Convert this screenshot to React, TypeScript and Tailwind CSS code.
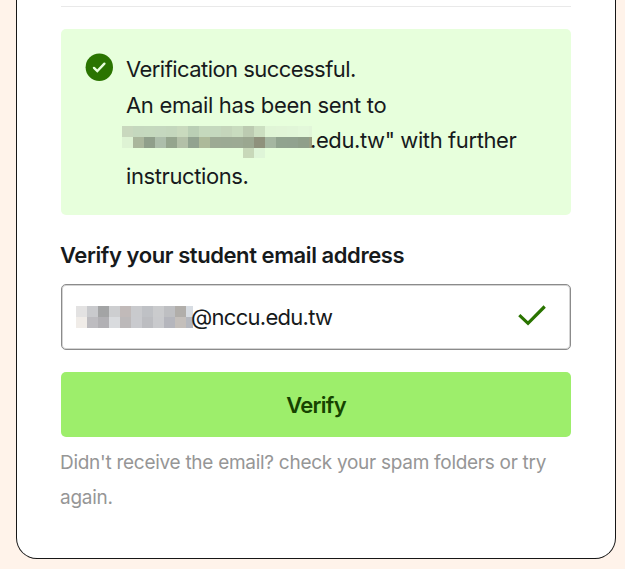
interface MosaicProps {
  rows: string[][];
}

const RECIPIENT_ROWS = [
  ["#c9d8be", "#c5d8be", "#c5d9be", "#c5d8bf", "#c4d7bd", "#c9dabe", "#bacfb5", "#c5d9bd", "#c5d9be", "#c5d6bb", "#c9dcbf", "#bccbb1", "#ccdfc1", "#e0f5d6", "#e1f5d7", "#e1f6d8", "#e3f8da", "#e2f6d9"],
  ["#def3d4", "#aab69c", "#909f8b", "#adbeab", "#95a58e", "#b3c0a8", "#92a390", "#adba9a", "#9daa94", "#9caa94", "#9daa94", "#9ba790", "#8f917c", "#a5b6a1", "#91a38f", "#91a28f", "#8f9f8a", "#999f83"],
  ["", "", "", "", "", "", "", "", "", "", "", "#c8d8b9", "#dff5d8", "", "", "", "", ""],
];

const LOCAL_PART_ROWS = [
  ["#e3e2e2", "#c9cacd", "#a3a4a5", "#cdced0", "#c1bab9", "#c9cacd", "#bfc1c5", "#cacbcd", "#bebfc2", "#b1aeaa", "#d7dce2"],
  ["#f0ece8", "#bdbcc0", "#b1b0b4", "#d9dbde", "#bcb9ba", "#c9cace", "#bcbdc1", "#c9cacd", "#b5b6bd", "#c4bfbb", "#b5b8bf"],
];

function Mosaic({ rows }: MosaicProps) {
  return (
    <span aria-hidden="true" className="flex flex-col">
      {rows.map((row, i) => (
        <span key={i} className="flex h-[11px]">
          {row.map((color, j) => (
            <span key={j} className="h-full w-[11px] shrink-0" style={{ backgroundColor: color || undefined }} />
          ))}
        </span>
      ))}
    </span>
  );
}

function SuccessIcon() {
  return (
    <svg viewBox="0 0 28 28" className="mt-px h-7 w-7 shrink-0" fill="none">
      <circle cx="14.3" cy="14.3" r="13.7" fill="#2a7400" />
      <path d="M9 14.9 12.3 18 19.4 10.7" stroke="#e7ffdc" strokeWidth="2.4" strokeLinecap="round" />
    </svg>
  );
}

function SuccessAlert() {
  return (
    <div role="status" className="flex h-[186px] rounded-[5px] bg-[#e7ffdc] pt-[23px] pl-[24px] text-[22px] leading-[35.6px]">
      <SuccessIcon />
      <div className="ml-[13px] whitespace-nowrap">
        <p className="tracking-[-0.55px]">Verification successful.</p>
        <p className="tracking-[-0.31px]">An email has been sent to</p>
        <p className="flex">
          <span className="-ml-[4px] h-[35px] w-[190px] shrink-0 overflow-hidden pt-[3px]">
            <Mosaic rows={RECIPIENT_ROWS} />
          </span>
          <span className="-ml-[2px] tracking-[-0.4px]">.edu.tw" with further</span>
        </p>
        <p className="tracking-[-0.4px]">instructions.</p>
      </div>
    </div>
  );
}

function EmailField() {
  return (
    <div className="mt-[11px] flex h-[66px] items-center rounded-[5px] border border-[#8b8b8b] pl-[14px] text-[22px] shadow-[inset_0_0_0_1px_#d4d4d4]">
      <span className="w-[117px] shrink-0 overflow-hidden">
        <Mosaic rows={LOCAL_PART_ROWS} />
      </span>
      <span className="-ml-[2px] tracking-[-0.72px]">@nccu.edu.tw</span>
      <svg viewBox="0 0 28 21" className="mr-[24px] mb-[3px] ml-auto h-[21px] w-7" fill="none">
        <path d="M1.3 10.2 10 18.3 26.7 1.5" stroke="#2a7400" strokeWidth="3.2" />
      </svg>
    </div>
  );
}

export default function App() {
  return (
    <main className="h-[569px] overflow-hidden bg-[#fff3ea] pl-4 font-['Inter',sans-serif] text-[#171a1c]">
      <section className="h-[559px] w-[600px] rounded-b-[21px] border border-t-0 border-[#171717] bg-white pt-[6px] pr-[44px] pl-[44px]">
        <div className="h-px bg-[#e9e9e9]" />
        <div className="mt-[22px]">
          <SuccessAlert />
        </div>
        <h2 className="mt-[25px] -ml-px h-[33px] text-[22px] leading-[31px] font-semibold tracking-[-0.42px] whitespace-nowrap">
          Verify your student email address
        </h2>
        <EmailField />
        <button className="mt-[22px] block h-[65px] w-full rounded-[5px] bg-[#9dee6b] pt-[2px] text-[22px] font-semibold tracking-[-0.7px] text-[#164300]">
          Verify
        </button>
        <p className="mt-[8px] -ml-px text-[19px] leading-[35px] tracking-[-0.28px] whitespace-nowrap text-[#969696]">
          Didn't receive the email? check your spam folders or try
          <br />
          again.
        </p>
      </section>
    </main>
  );
}
